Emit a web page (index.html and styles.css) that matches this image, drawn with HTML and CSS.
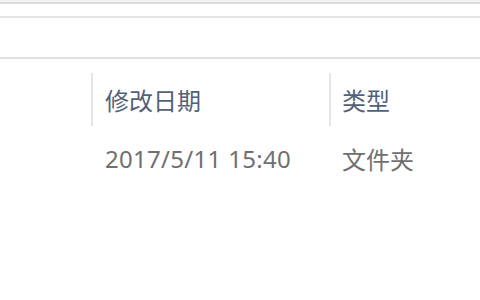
FILE: index.html
```html
<!DOCTYPE html>
<html lang="zh-CN">
<head>
  <meta charset="utf-8">
  <title>文件夹</title>
  <link rel="stylesheet" href="styles.css">
</head>
<body>
  <!-- top bars -->
  <div class="strip"></div>
  <div class="addressbar"></div>
  <div class="toolbar"></div>

  <!-- file list -->
  <section class="list">
    <div class="row header">
      <div class="cell name"></div>
      <div class="cell date sep">修改日期</div>
      <div class="cell type sep">类型</div>
    </div>
    <div class="row item">
      <div class="cell name"></div>
      <div class="cell date digits">2017/5/11 15:40</div>
      <div class="cell type">文件夹</div>
    </div>
  </section>
</body>
</html>
```

FILE: styles.css
```css
body {
  margin: 0;
  padding: 0;
  background-color: #ffffff;
  font-family: "Noto Sans", "Noto Sans CJK SC", sans-serif;
  font-size: 24px;
  overflow: hidden;
}

.strip {
  height: 2px;
  background-color: #f2f2f3;
}

.addressbar {
  height: 12px;
  border-top: 2px solid #dcdde1;
  border-bottom: 2px solid #e3e3e3;
}

.toolbar {
  height: 39px;
  border-bottom: 2px solid #e0e0e0;
}

.list {
  padding-top: 14px;
}

.row {
  display: flex;
}

.header {
  height: 53px;
  color: #52617a;
}

.item {
  height: 64px;
  color: #6f6f6f;
}

.cell {
  display: flex;
  align-items: center;
  box-sizing: border-box;
  white-space: nowrap;
}

.name {
  width: 91px;
}

.date {
  width: 238px;
  padding-left: 14px;
}

.digits {
  letter-spacing: 0.3px;
}

.type {
  padding-left: 13px;
}

.sep {
  border-left: 2px solid #e5e5e5;
  padding-left: 12px;
}

.type.sep {
  padding-left: 11px;
}
```
